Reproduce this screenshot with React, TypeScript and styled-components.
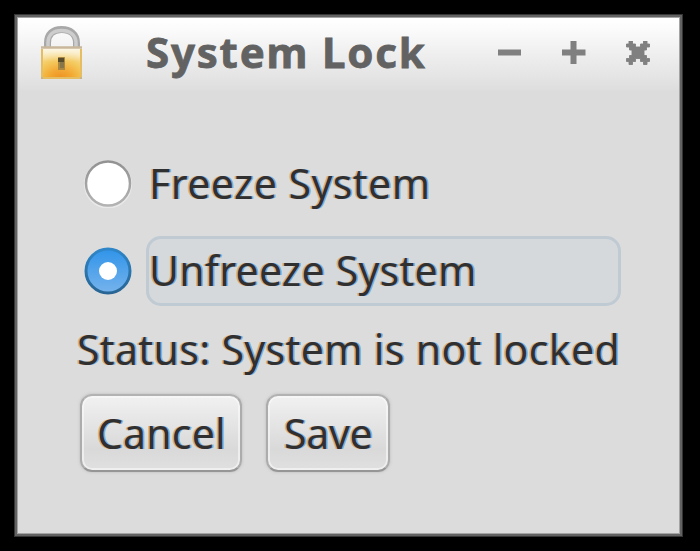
import React, { useState } from "react";
import styled, { createGlobalStyle } from "styled-components";

const GlobalStyle = createGlobalStyle`
  * { box-sizing: border-box; }
  body { margin: 0; background: #000; }
  button { font: inherit; }
`;

const Desktop = styled.main`
  width: 700px;
  height: 551px;
  padding: 14px 0 0 14px;
  background: #000;
  font-family: "Noto Sans", "Open Sans", sans-serif;
  overflow: hidden;
`;

const Window = styled.section`
  width: 669px;
  height: 523px;
  border: 1px solid #353535;
  box-shadow: inset 0 0 0 2px #626262, inset 0 0 0 3px #a4a4a4;
  background: #dcdcdc;
  padding: 3px;
`;

const TitleBar = styled.header`
  display: flex;
  height: 73px;
  padding-left: 22px;
  background: linear-gradient(#fff 0%, #fcfcfc 12%, #ededed 55%, #dedede 98%, #dcdcdc 100%);
`;

const Title = styled.h1<{ $spacing: number }>`
  margin: 0 0 0 63px;
  width: 351px;
  height: 73px;
  font-size: 42px;
  font-weight: 700;
  line-height: 67px;
  letter-spacing: ${(p) => p.$spacing}px;
  white-space: nowrap;
  color: #626262;
  -webkit-text-stroke: 0.8px #626262;
`;

const Controls = styled.nav`
  display: flex;
  gap: 40px;
  padding: 23px 0 0 1px;
`;

const ControlButton = styled.button`
  width: 24px;
  height: 24px;
  padding: 0;
  border: 0;
  background: none;
  color: #808080;
  svg { display: block; }
`;

const Content = styled.div`
  padding: 58px 0 0 59px;
`;

const Option = styled.div`
  display: flex;
  align-items: center;
  height: 70px;
  margin-bottom: 17px;
  padding-left: 7px;
`;

const Radio = styled.button`
  width: 48px;
  height: 48px;
  margin-right: 14px;
  padding: 0;
  border: 0;
  background: none;
  svg { display: block; }
`;

const Label = styled.span<{ $spacing: number }>`
  display: block;
  font-size: 41px;
  line-height: 62px;
  letter-spacing: ${(p) => p.$spacing}px;
  white-space: nowrap;
  color: #303030;
  text-shadow: -1.5px 0 rgba(208, 130, 40, 0.5), 1.5px 0 rgba(45, 135, 220, 0.55);
`;

const OptionFrame = styled.div<{ $active: boolean }>`
  width: 475px;
  height: 70px;
  border: 3px solid ${(p) => (p.$active ? "#bfcad3" : "transparent")};
  border-radius: 15px;
  background: ${(p) => (p.$active ? "#d6d9dc" : "transparent")};
`;

const Status = styled.div`
  height: 60px;
  margin-top: -5px;
`;

const Actions = styled.div`
  display: flex;
  gap: 24px;
  padding: 16px 0 0 3px;
`;

const PushButton = styled.button<{ $width: number; $inset: number }>`
  width: ${(p) => p.$width}px;
  height: 78px;
  padding: 0 0 0 ${(p) => p.$inset}px;
  text-align: left;
  border: 2px solid;
  border-color: #b2b2b2 #acacac #969696;
  border-radius: 12px;
  background: linear-gradient(#f1f1f1, #d9d9d9 72%, #e0e0e0);
  box-shadow: inset 0 0 0 2px rgba(250, 250, 250, 0.6), 0 0 2px 1px rgba(190, 190, 190, 0.55);
`;

function PadlockIcon() {
  return (
    <svg width="42" height="54" viewBox="0 0 42 54">
      <defs>
        <radialGradient id="brass" cx="0.48" cy="0.95" r="0.85">
          <stop offset="0" stopColor="#ee9222" />
          <stop offset="0.3" stopColor="#f2a52b" />
          <stop offset="0.65" stopColor="#f3c550" />
          <stop offset="1" stopColor="#f5dc93" />
        </radialGradient>
        <linearGradient id="sheen" x2="0" y2="1">
          <stop offset="0" stopColor="#fff" stopOpacity="0.85" />
          <stop offset="0.45" stopColor="#fff" stopOpacity="0.1" />
          <stop offset="1" stopColor="#fff" stopOpacity="0" />
        </linearGradient>
      </defs>
      <path d="M6.5 22V17C6.5 8 12 3.5 20.5 3.5S35.5 8 35.5 17V22" fill="none" stroke="#a8a8a8" strokeWidth="7" />
      <path d="M7 22V17C7 8.5 12.5 4.5 20.5 4.5S35 8.5 35 17V22" fill="none" stroke="#cdcdcd" strokeWidth="3.5" />
      <rect y="21" width="41" height="32" fill="url(#brass)" />
      <rect y="21" width="41" height="32" fill="url(#sheen)" />
      <path d="M1 23V52M40 23V52M2 52H39" fill="none" stroke="#e5bd62" strokeWidth="2" />
      <path d="M0 21.5H41" stroke="#c8b79a" strokeWidth="2.5" />
      <path d="M0 51h2v2H0zM39 51h2v2h-2z" fill="#c7b48d" />
      <rect x="17" y="31" width="7" height="13" rx="0.5" fill="#a98843" />
      <rect x="17" y="32" width="6" height="4" fill="#584b2b" />
      <rect x="19" y="36" width="4" height="6" fill="#86764a" />
    </svg>
  );
}

const PadlockSlot = styled.div`
  width: 42px;
  height: 54px;
  margin: 8px 0 0 1px;
  svg { display: block; }
`;

const glyphs = {
  Minimize: "M0 8.5H23V14.5H0Z",
  Maximize: "M8.5 0H14.5V8.5H23.5V14.5H14.5V23H8.5V14.5H0V8.5H8.5Z",
  Close: "M3 0H6.5V3H9.5V6H14.5V3H17.5V0H21V3H23.5V6H20.5V9H18V14.5H20.5V17.5H23.5V20.5H21V23.5H17.5V20.5H14.5V17.5H9.5V20.5H6.5V23.5H3V20.5H0.5V17.5H3.5V14.5H6V9H3.5V6H0.5V3H3Z",
};

function WindowControl({ name }: { name: keyof typeof glyphs }) {
  return (
    <ControlButton aria-label={name}>
      <svg width="24" height="24" viewBox="0 0 24 24">
        <path d={glyphs[name]} fill="currentColor" stroke="currentColor" strokeWidth={name === "Close" ? 0.9 : 0} />
      </svg>
    </ControlButton>
  );
}

function RadioMark({ checked }: { checked: boolean }) {
  return (
    <svg width="48" height="48" viewBox="0 0 48 48">
      <defs>
        <linearGradient id="fillBlue" x2="0" y2="1">
          <stop offset="0" stopColor="#3094e9" />
          <stop offset="1" stopColor="#76b3ec" />
        </linearGradient>
        <linearGradient id="rimBlue" x2="0" y2="1">
          <stop offset="0" stopColor="#2f86c8" />
          <stop offset="1" stopColor="#286594" />
        </linearGradient>
        <linearGradient id="rimGray" x2="0" y2="1">
          <stop offset="0" stopColor="#929292" />
          <stop offset="1" stopColor="#b3b3b3" />
        </linearGradient>
      </defs>
      {checked ? (
        <>
          <circle cx="24" cy="24" r="22" fill="url(#fillBlue)" stroke="url(#rimBlue)" strokeWidth="3" />
          <circle cx="24" cy="24" r="9" fill="#fff" />
        </>
      ) : (
        <>
          <circle cx="24" cy="24.5" r="23" fill="none" stroke="#e9e9e9" strokeWidth="2" />
          <circle cx="24" cy="23.5" r="22" fill="#fff" stroke="url(#rimGray)" strokeWidth="2.5" />
        </>
      )}
    </svg>
  );
}

const options = [
  { id: "freeze", text: "Freeze System", spacing: 0.45 },
  { id: "unfreeze", text: "Unfreeze System", spacing: 0.25 },
];

export default function App() {
  const [selected, setSelected] = useState("unfreeze");
  return (
    <>
      <GlobalStyle />
      <Desktop>
        <Window>
          <TitleBar>
            <PadlockSlot><PadlockIcon /></PadlockSlot>
            <Title $spacing={1.8}>System Lock</Title>
            <Controls>
              <WindowControl name="Minimize" />
              <WindowControl name="Maximize" />
              <WindowControl name="Close" />
            </Controls>
          </TitleBar>
          <Content>
            {options.map((o) => (
              <Option key={o.id}>
                <Radio role="radio" aria-label={o.text} aria-checked={selected === o.id} onClick={() => setSelected(o.id)}>
                  <RadioMark checked={selected === o.id} />
                </Radio>
                <OptionFrame $active={selected === o.id}>
                  <Label $spacing={o.spacing}>{o.text}</Label>
                </OptionFrame>
              </Option>
            ))}
            <Status><Label $spacing={0.34}>Status: System is not locked</Label></Status>
            <Actions>
              <PushButton $width={162} $inset={15}><Label $spacing={0.2}>Cancel</Label></PushButton>
              <PushButton $width={124} $inset={16}><Label $spacing={-0.3}>Save</Label></PushButton>
            </Actions>
          </Content>
        </Window>
      </Desktop>
    </>
  );
}
